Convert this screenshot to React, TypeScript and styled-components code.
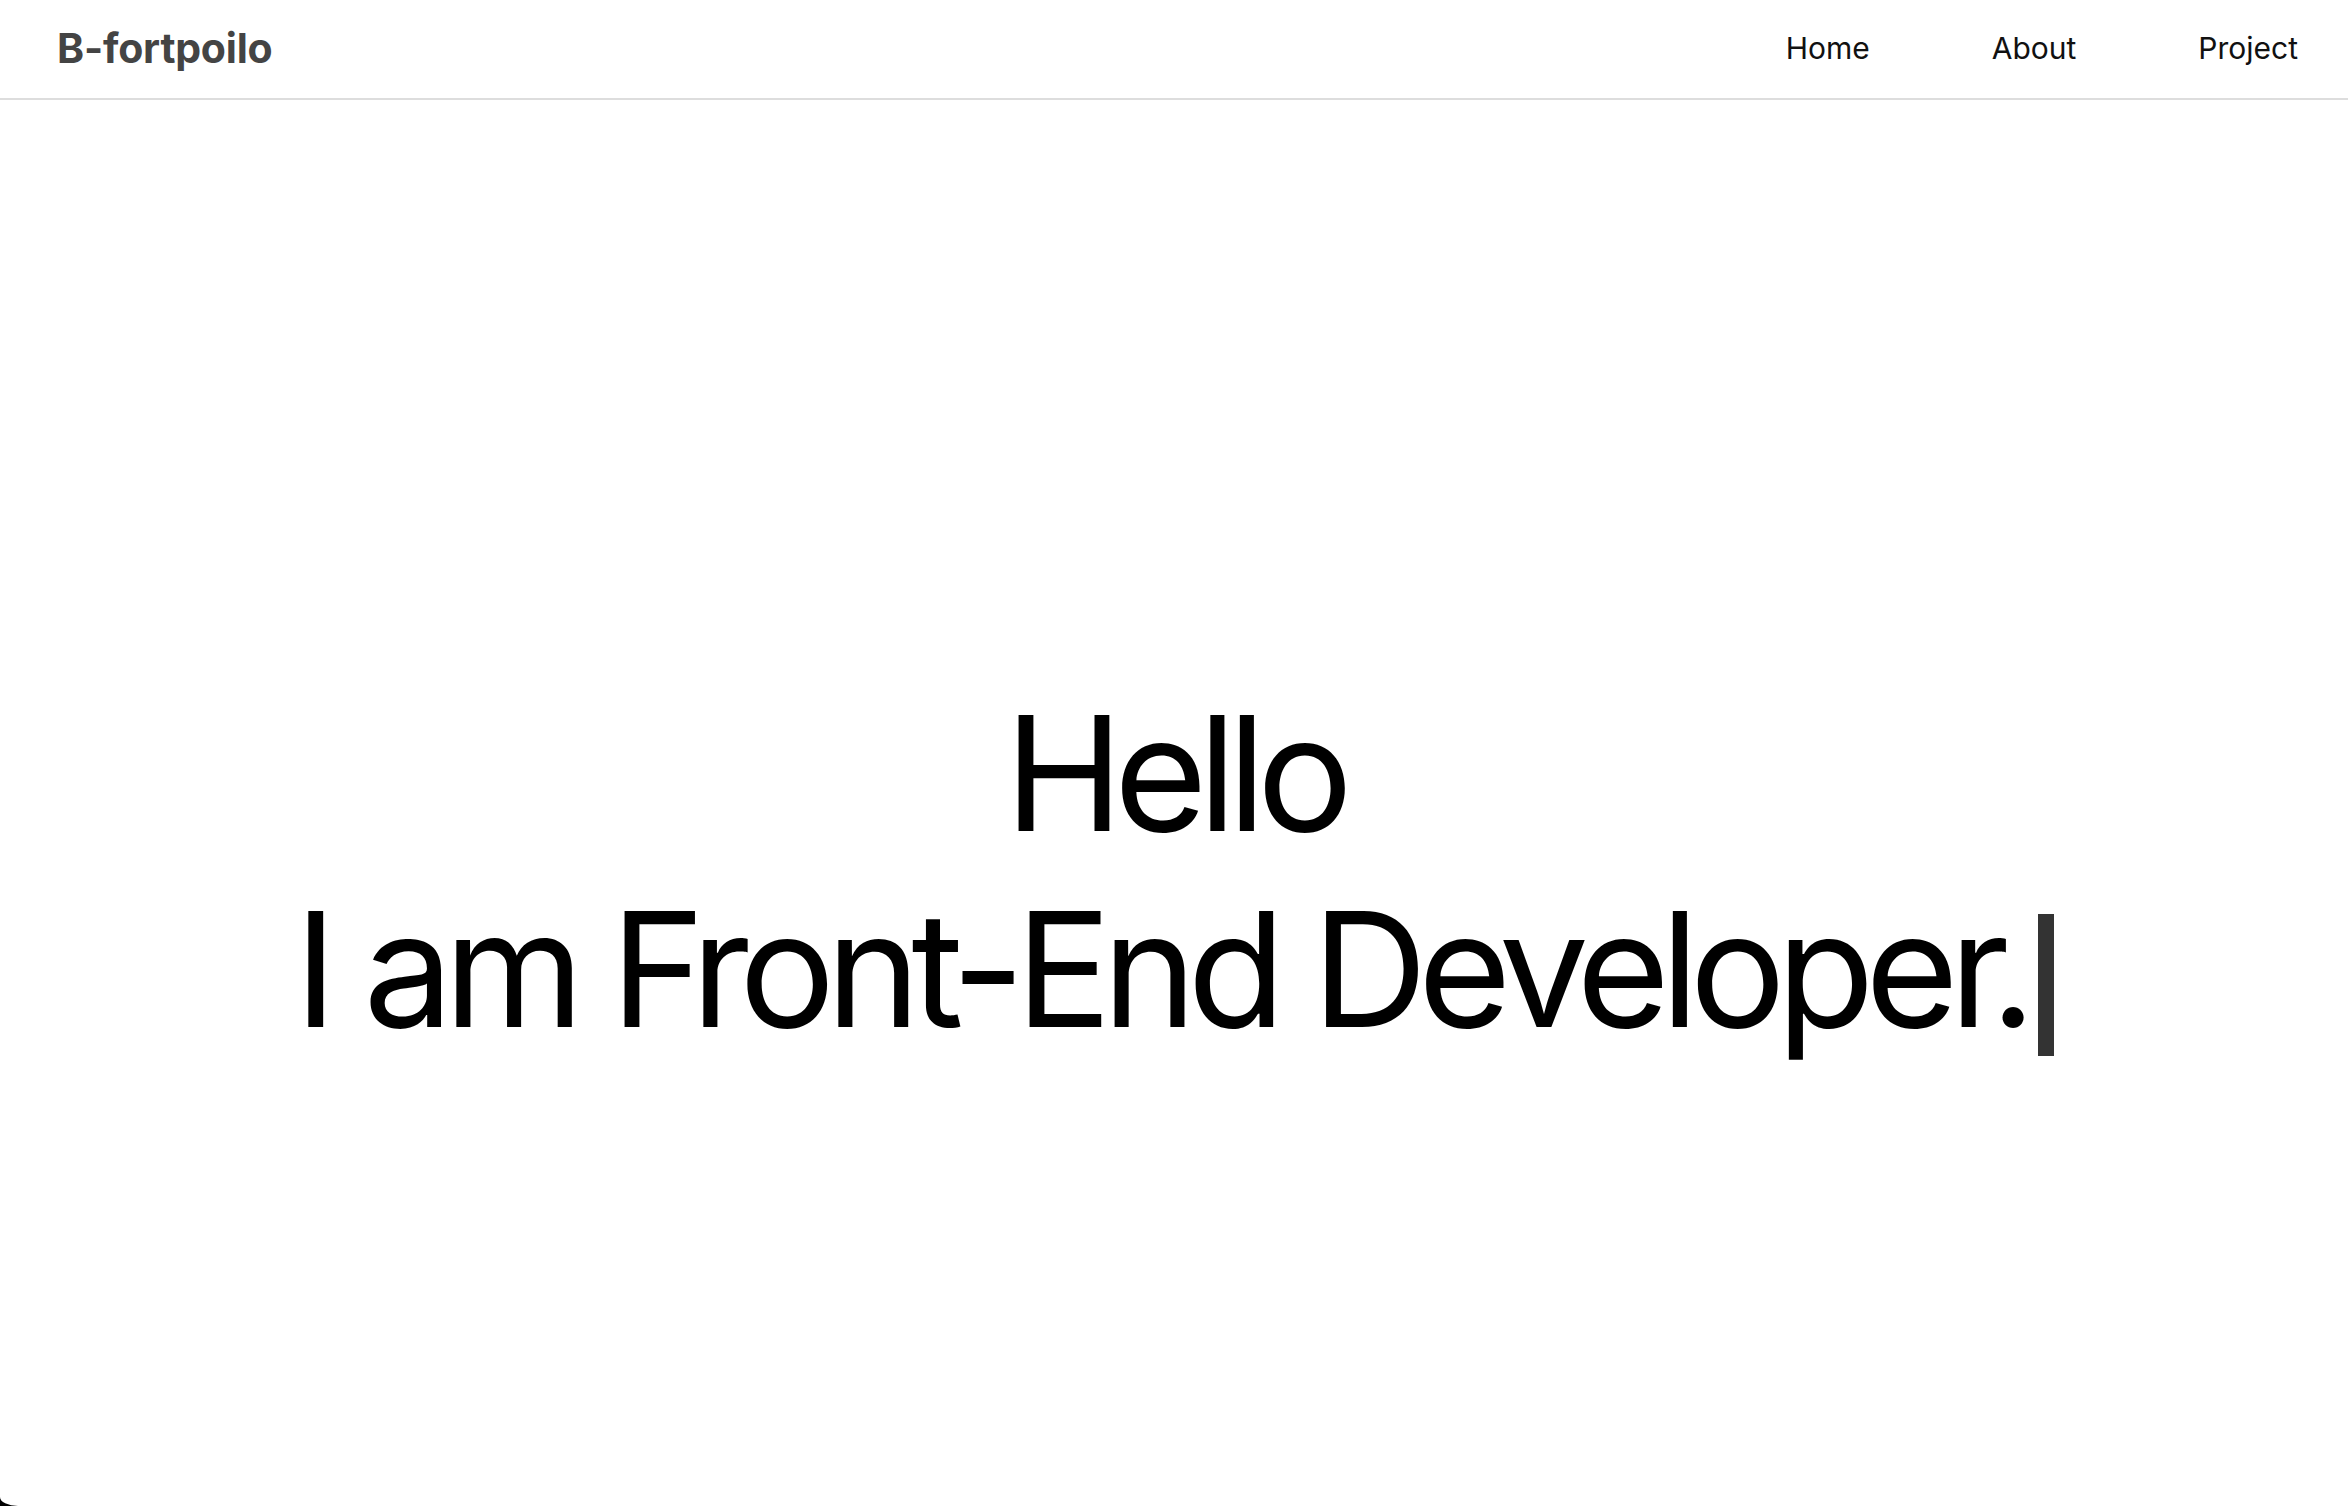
import * as React from "react";
import styled, { createGlobalStyle, keyframes } from "styled-components";

const GlobalStyle = createGlobalStyle`
  * {
    box-sizing: border-box;
  }
  html, body {
    margin: 0;
    padding: 0;
    background: #000;
  }
  body {
    font-family: Inter, "Noto Sans", sans-serif;
    color: #000;
  }
  a {
    text-decoration: none;
    color: inherit;
  }
`;

const blink = keyframes`
  0%, 49% { opacity: 1; }
  50%, 100% { opacity: 0; }
`;

const Page = styled.div`
  display: flex;
  flex-direction: column;
  min-height: 100vh;
  background: #fff;
  border-bottom-left-radius: 18px 9px;
  overflow: hidden;
`;

const Header = styled.header`
  display: flex;
  align-items: center;
  justify-content: space-between;
  height: 100px;
  padding: 0 50px 2px 57px;
  border-bottom: 2px solid #dddddd;
`;

const Logo = styled.a`
  font-size: 41px;
  font-weight: 700;
  letter-spacing: -0.2px;
  color: #444;
`;

const Nav = styled.nav`
  display: flex;
  gap: 122px;
`;

const NavLink = styled.a`
  font-size: 30px;
  font-weight: 400;
  color: #111;
`;

const Hero = styled.main`
  flex: 1;
  display: flex;
  align-items: center;
  justify-content: center;
  padding-top: 136px;
`;

const Title = styled.h1`
  margin: 0;
  text-align: center;
  font-size: 160px;
  font-weight: 400;
  line-height: 196px;
  letter-spacing: -9.3px;
  color: #000;
`;

const Line = styled.span`
  display: block;
  white-space: nowrap;
`;

const Cursor = styled.span`
  display: inline-block;
  width: 16px;
  height: 142px;
  margin-left: 11px;
  vertical-align: -29px;
  background: #333;
  animation: ${blink} 1s step-end infinite;
  animation-play-state: paused;
`;

export default function App() {
  return (
    <>
      <GlobalStyle />
      <Page>
        <Header>
          <Logo href="#">B-fortpoilo</Logo>
          <Nav>
            <NavLink href="#">Home</NavLink>
            <NavLink href="#">About</NavLink>
            <NavLink href="#">Project</NavLink>
          </Nav>
        </Header>
        <Hero>
          <Title>
            <Line>Hello</Line>
            <Line>
              I am Front-End Developer.
              <Cursor />
            </Line>
          </Title>
        </Hero>
      </Page>
    </>
  );
}
